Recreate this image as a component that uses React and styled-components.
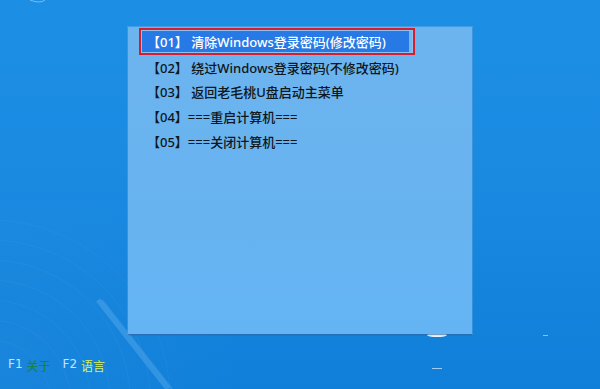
import React from "react";
import styled, { createGlobalStyle } from "styled-components";

const Global = createGlobalStyle`
  html, body { margin: 0; padding: 0; }
  body { width: 600px; height: 389px; overflow: hidden; }
`;

const Screen = styled.div`
  position: relative;
  width: 600px;
  height: 389px;
  overflow: hidden;
  display: flex;
  flex-direction: column;
  background: linear-gradient(180deg, #1c8fe4 0%, #1a8ae1 45%, #1383dc 75%, #0f7fd9 100%);
  font-family: "Noto Sans", "Noto Sans CJK SC", sans-serif;
`;

const Decor = styled.svg`
  position: absolute;
  left: 0;
  top: 0;
  pointer-events: none;
`;

const Panel = styled.div`
  position: relative;
  z-index: 1;
  margin: 27px 0 0 128px;
  width: 344px;
  height: 307px;
  box-sizing: border-box;
  padding: 1px 0 0 11px;
  background: linear-gradient(180deg, #6cb4ee 0%, #67b3f0 60%, #64b4f4 100%);
  box-shadow: 0 1px 1px rgba(0, 40, 110, 0.35), 0 0 0 1px rgba(120, 180, 235, 0.4);
  display: flex;
  flex-direction: column;
`;

const Row = styled.div`
  box-sizing: border-box;
  width: 276px;
  height: ${(p) => (p.$selected ? "27px" : "24.6px")};
  display: flex;
  align-items: center;
  padding-left: ${(p) => (p.$selected ? "6px" : "8px")};
  font-size: 13px;
  font-weight: 500;
  white-space: pre;
  color: ${(p) => (p.$selected ? "#ffffff" : "#0e1620")};
  border: ${(p) => (p.$selected ? "2px solid #d41e2c" : "none")};
  background: ${(p) => (p.$selected ? "#2779e6" : "transparent")};
  box-shadow: ${(p) => (p.$selected ? "inset 0 0 0 1px #8fc0f0, inset -3px 0 0 1px #7ab6ee" : "none")};
`;

const Footer = styled.div`
  position: relative;
  z-index: 1;
  margin-top: auto;
  height: 52px;
  display: flex;
  align-items: flex-start;
  padding: 20px 0 0 8px;
  box-sizing: border-box;
  font-size: 12px;
  font-family: "DejaVu Sans", "Noto Sans CJK SC", sans-serif;
`;

const Key = styled.span`
  color: #c4e2ff;
  margin-right: 4px;
`;

const Label = styled.span`
  color: ${(p) => p.$color};
  margin-right: ${(p) => p.$gap || "0"};
`;

const items = [
  "【01】 清除Windows登录密码(修改密码)",
  "【02】 绕过Windows登录密码(不修改密码)",
  "【03】 返回老毛桃U盘启动主菜单",
  "【04】===重启计算机===",
  "【05】===关闭计算机===",
];

export default function App() {
  return (
    <Screen>
      <Global />
      <Decor width="600" height="389" viewBox="0 0 600 389">
        <defs>
          <radialGradient id="glow" cx="0" cy="389" r="260" gradientUnits="userSpaceOnUse">
            <stop offset="0" stopColor="#ffffff" stopOpacity="0.04" />
            <stop offset="1" stopColor="#ffffff" stopOpacity="0" />
          </radialGradient>
        </defs>
        <rect x="0" y="200" width="300" height="189" fill="url(#glow)" />
        {[60, 80, 100, 120, 140, 160, 180].map((r) => (
          <circle key={r} cx="-10" cy="400" r={r} fill="none" stroke="#ffffff" strokeOpacity="0.035" strokeWidth="1" />
        ))}
        <path d="M98 300 L168 389" stroke="#7cc0f4" strokeOpacity="0.3" strokeWidth="5" />
        <path d="M102 300 L172 389" stroke="#a6d4f8" strokeOpacity="0.18" strokeWidth="2" />
        <ellipse cx="437" cy="335" rx="10" ry="2" fill="#ffffff" opacity="0.9" />
        <rect x="432" y="368" width="10" height="1" fill="#ffffff" opacity="0.6" />
        <rect x="543" y="335" width="5" height="1" fill="#ffffff" opacity="0.5" />
        <path d="M30 0 Q 40 4 45 0" stroke="#ffffff" strokeOpacity="0.4" fill="none" />
      </Decor>
      <Panel>
        {items.map((t, i) => (
          <Row key={i} $selected={i === 0}>
            {t}
          </Row>
        ))}
      </Panel>
      <Footer>
        <Key>F1</Key>
        <Label $color="#1a8236" $gap="12px">关于</Label>
        <Key>F2</Key>
        <Label $color="#d9f25a">语言</Label>
      </Footer>
    </Screen>
  );
}
